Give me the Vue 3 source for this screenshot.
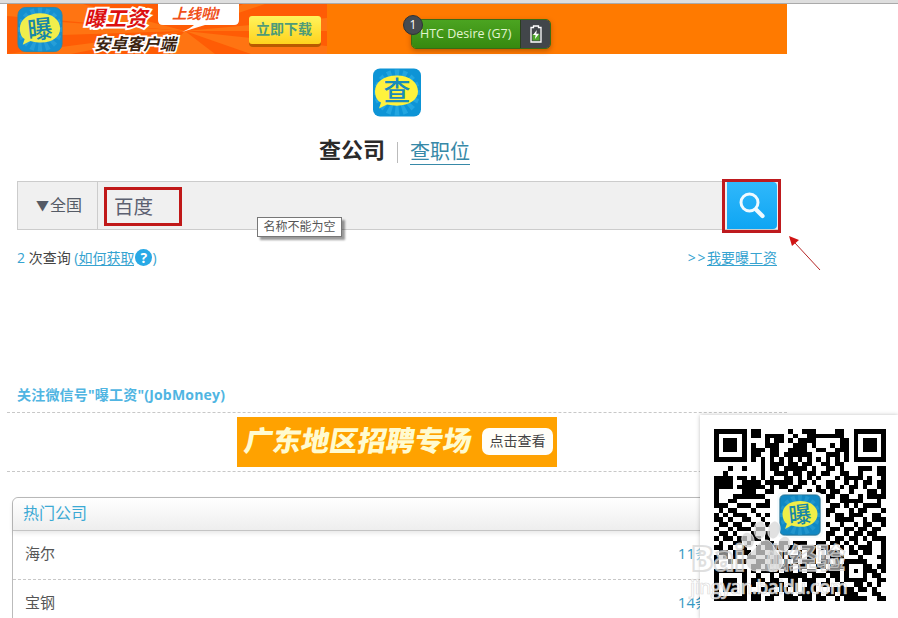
<template>
    <div class="page">
        <div class="browser-edge"></div>

        <div class="wrap">
            <!-- App download banner -->
            <div class="top-banner">
                <svg class="promo" width="320" height="50" viewBox="0 0 320 50">
                    <defs>
                        <linearGradient id="promoBtn" x1="0" y1="0" x2="0" y2="1">
                            <stop offset="0" stop-color="#fff45c" />
                            <stop offset="1" stop-color="#ffd21e" />
                        </linearGradient>
                    </defs>
                    <rect width="320" height="50" fill="#ff5c05" />
                    <g fill="#ff7412">
                        <path d="M178 27L76 0H0v12z" />
                        <path d="M178 27L54 18v13z" />
                        <path d="M178 27L0 50h64z" />
                        <path d="M178 27L156 50h52z" />
                        <path d="M178 27L236 0h22z" />
                        <path d="M178 27L320 14v13z" />
                        <path d="M178 27L320 42v8h-76z" />
                    </g>
                    <path d="M151 -3H232V16Q232 21 227 21H198Q188 24 175 28Q184 24 187 21H156Q151 21 151 16Z" fill="#fff" />
                    <g class="promo-text">
                        <text x="77" y="22" class="promo-name">曝工资</text>
                        <text x="87" y="46" class="promo-sub" textLength="82">安卓客户端</text>
                        <text x="165" y="15" class="promo-online">上线啦!</text>
                    </g>
                    <rect x="242" y="14" width="72" height="29" rx="4" fill="#b85a00" />
                    <rect x="242" y="12" width="72" height="28" rx="3" fill="url(#promoBtn)" />
                    <text x="249" y="30" class="promo-btn">立即下载</text>
                    <svg x="10" y="2" width="46" height="47" viewBox="0 0 48 48">
                        <rect x="1" y="1" width="46" height="46" rx="8" fill="#1490d0" stroke="#2f86a8" />
                        <path v-for="a in rays" :key="a" d="M24 24L21.5 1h5z" fill="#36abe0" opacity=".5" :transform="`rotate(${a} 24 24)`" />
                        <path d="M24 7C11 7 3 14 3 23c0 6 2 9 5 11l-2 6 8-4c18 5 31-2 31-13C45 14 37 7 24 7z" fill="#f0ee4c" />
                        <text x="24" y="33" class="logo-bao" transform="rotate(-6 24 24)">曝</text>
                    </svg>
                </svg>
                <div class="device">
                    <span class="device-count">1</span>
                    <span class="device-name">HTC Desire (G7)</span>
                    <span class="device-battery">
                        <svg width="12" height="18" viewBox="0 0 12 18">
                            <path d="M1 2.5h2.5v-1.5h5v1.5H11V17H1z" fill="none" stroke="#fff" stroke-width="1.3" />
                            <rect x="2.5" y="9" width="7" height="6.5" fill="#4fa82c" />
                            <path d="M6.8 5L3 10h2.6L5 14l4-5.2H6.3z" fill="#fff" />
                        </svg>
                    </span>
                </div>
            </div>

            <div class="logo">
                <svg width="48" height="49" viewBox="0 0 48 48">
                    <rect width="48" height="48" rx="7" fill="#0d94d6" />
                    <path v-for="a in rays" :key="a" d="M24 24L21.5 1h5z" fill="#31b2e8" opacity=".6" :transform="`rotate(${a} 24 24)`" />
                    <path d="M24 7C10 7 2 14 2 23c0 5 2 9 6 11l-2 6 8-4c18 4 31-3 31-13C45 14 37 7 24 7z" fill="#fff23c" />
                    <text x="24" y="32.5" class="logo-cha">查</text>
                </svg>
            </div>

            <div class="tabs">
                <span class="tab-on">查公司</span>
                <span class="tab-sep"></span>
                <a class="tab-link">查职位</a>
            </div>

            <div class="search">
                <div class="region"><span class="caret">▼</span>全国</div>
                <div class="field">
                    <div class="keyword">百度</div>
                    <div class="tip">名称不能为空</div>
                </div>
                <div class="search-btn">
                    <svg width="50" height="47" viewBox="0 0 50 47">
                        <circle cx="22.5" cy="20.5" r="8.5" fill="none" stroke="#effaff" stroke-width="3" />
                        <path d="M29 27.5l6.5 6.5" stroke="#effaff" stroke-width="4.2" stroke-linecap="round" />
                    </svg>
                    <span class="mark"></span>
                    <svg class="arrow" width="34" height="36" viewBox="0 0 34 36">
                        <path d="M7 7L32 34" stroke="#b52626" stroke-width="1" />
                        <path d="M1 0L11 4L4 10z" fill="#d01414" />
                    </svg>
                </div>
            </div>

            <div class="info">
                <div><i>2</i> 次查询 <span class="blue">(<a>如何获取</a><b class="help">?</b>)</span></div>
                <div class="blue"><span class="more">&gt;&gt;</span><a>我要曝工资</a></div>
            </div>

            <div class="wechat">关注微信号"曝工资"(JobMoney)</div>

            <div class="ad-row">
                <div class="ad">
                    <svg class="ad-title" width="245" height="50" viewBox="0 0 245 50">
                        <text x="7" y="34" textLength="227" lengthAdjust="spacingAndGlyphs" transform="skewX(-10) translate(5 0)">广东地区招聘专场</text>
                    </svg>
                    <span class="ad-btn">点击查看</span>
                </div>
            </div>

            <div class="hot">
                <div class="hot-head">热门公司</div>
                <div v-for="item in companies" :key="item.name" class="hot-item">
                    <span>{{ item.name }}</span>
                    <span class="hot-count">{{ item.count }}条</span>
                </div>
            </div>
        </div>

        <!-- Floating QR code -->
        <div class="qr">
            <svg width="198" height="204" viewBox="0 0 198 204">
                <g transform="translate(14 14) scale(4.65)">
                    <path :d="qrPath" fill="#000" shape-rendering="crispEdges" />
                </g>
                <rect x="77" y="77" width="46" height="46" rx="6" fill="#f4fbfd" />
                <svg x="79" y="79" width="42" height="42" viewBox="0 0 48 48">
                    <rect x="1" y="1" width="46" height="46" rx="5" fill="#1088c4" stroke="#27708f" />
                    <path v-for="a in rays" :key="a" d="M24 24L21.5 1h5z" fill="#2fa3d6" opacity=".5" :transform="`rotate(${a} 24 24)`" />
                    <path d="M24 8C11 8 4 15 4 23c0 5 2 9 5 11l-2 6 7-4c18 5 30-3 30-13C44 15 37 8 24 8z" fill="#f0ee48" />
                    <text x="24" y="33" class="logo-bao" transform="rotate(-6 24 24)">曝</text>
                </svg>
            </svg>
        </div>

        <svg class="watermark" width="170" height="90" viewBox="0 0 170 90">
            <g class="wm-big">
                <text x="4" y="50" textLength="54" lengthAdjust="spacingAndGlyphs">Bai</text>
                <text x="80" y="50" textLength="22" lengthAdjust="spacingAndGlyphs">du</text>
                <text x="102" y="48" class="wm-cn" textLength="56">经验</text>
            </g>
            <g class="wm-paw">
                <ellipse cx="61" cy="19" rx="6" ry="8" transform="rotate(-20 61 19)" />
                <ellipse cx="73" cy="9" rx="6" ry="9" />
                <ellipse cx="87" cy="9" rx="6" ry="9" transform="rotate(12 87 9)" />
                <ellipse cx="97" cy="23" rx="6" ry="8" transform="rotate(20 97 23)" />
                <path d="M79 19c-7 0-9 8-16 13-7 6-4 18 6 18 6 0 8-1 13 0 12 3 18-9 10-17-6-6-7-14-13-14z" />
            </g>
            <text x="3" y="73" class="wm-url" textLength="158">jingyan.baidu.com</text>
        </svg>
    </div>
</template>

<script setup>
import { computed } from "vue";

const companies = [
    { name: "海尔", count: 11 },
    { name: "宝钢", count: 14 },
];

// Angles of the light rays behind the logo bubble
const rays = Array.from({ length: 16 }, (_, i) => i * 22.5);

const qrRows = [
    "1111111011000000100111000011001111111",
    "1000001011011110010011111111001000001",
    "1011101000010110101111000001101011101",
    "1011101010011100011101000101101011101",
    "1011101011101100111100110011101011101",
    "1000001011001101111110001110101000001",
    "1111111010101010101010101010101111111",
    "0000000000101110110110011011000000000",
    "0001001000101101111101001101000111011",
    "0010000000100111011011011001100100011",
    "1111011010101001101010100010111101001",
    "1111001111011111101101001100101011011",
    "1111011111101011011000101101011010011",
    "1000001110011000110010110110010001101",
    "1000111111100000000000001101100101111",
    "1001100000010000000000001001111100010",
    "1110011101110000000000000110101011110",
    "0101100010000000000000001100010110001",
    "1010111001010000000000001011011100110",
    "1101001100100000000000000011110010111",
    "0110110010010000000000001001001011001",
    "1001011101100000000000000110110110110",
    "0110100010010000000000001100101101100",
    "1011011011010000000000001011011010111",
    "0100110100111011011100110110101001001",
    "1101001001011110110111011001010111001",
    "0110111101101011001011001110011011001",
    "1010100110010110111011010111000100011",
    "1001011001101101010111011010111110001",
    "0000000011010011101100110111100011011",
    "1111111010111101101011001110101011101",
    "1000001001001011111101110110100010110",
    "1011101011101100110111001010111110011",
    "1011101010011110110011011001001101010",
    "1011101000111011010111000111110110100",
    "1000001011001101101110101101111000110",
    "1111111011011001110110110010111110011",
];

const qrPath = computed(() =>
    qrRows
        .map((row, y) => [...row].map((cell, x) => (cell === "1" ? `M${x} ${y}h1v1h-1z` : "")).join(""))
        .join("")
);
</script>

<style>
body {
    margin: 0;
    background: #fff;
    overflow: hidden;
}
</style>

<style scoped>
.page {
    position: relative;
    width: 898px;
    height: 618px;
    overflow: hidden;
    background: #fff;
    font-family: "Open Sans", "Noto Sans CJK SC", sans-serif;
    color: #444;
}

.browser-edge {
    height: 4px;
    box-sizing: border-box;
    background: #dedede;
    border-bottom: 1px solid #aaa;
}

.wrap {
    width: 780px;
    margin-left: 7px;
}

.top-banner {
    display: flex;
    height: 50px;
    background: #ff7a00;
}

.promo-name {
    font-size: 21px;
    font-weight: 700;
    font-style: italic;
    fill: #dc1010;
    stroke: #fff;
    stroke-width: 4px;
    paint-order: stroke;
}

.promo-sub {
    font-size: 16.5px;
    font-weight: 700;
    font-style: italic;
    fill: #3c2410;
    stroke: #fff;
    stroke-width: 3.5px;
    paint-order: stroke;
}

.promo-online {
    font-size: 14.5px;
    font-weight: 700;
    font-style: italic;
    fill: #f0501a;
}

.promo-btn {
    font-size: 14px;
    font-weight: 700;
    fill: #4e9b78;
}

.logo-bao {
    font-size: 26px;
    font-weight: 500;
    fill: #1787a8;
    text-anchor: middle;
}

.logo-cha {
    font-size: 27px;
    font-weight: 500;
    fill: #1a8cba;
    text-anchor: middle;
}

.device {
    position: relative;
    display: flex;
    box-sizing: border-box;
    width: 140px;
    height: 30px;
    margin: 15px 0 0 84px;
    border: 1px solid #3c6b14;
    border-radius: 5px;
    box-shadow: 0 2px 5px rgba(120, 50, 0, .45);
}

.device-name {
    width: 108px;
    box-sizing: border-box;
    padding-left: 8px;
    line-height: 28px;
    font-size: 12.5px;
    white-space: nowrap;
    color: #e2f5d0;
    background: linear-gradient(#4ba421, #37890f);
    border-radius: 4px 0 0 4px;
}

.device-battery {
    display: flex;
    flex: 1;
    align-items: center;
    justify-content: center;
    background: #42464a;
    border-left: 1px solid #29401c;
    border-radius: 0 4px 4px 0;
}

.device-count {
    position: absolute;
    left: -9px;
    top: -5px;
    width: 18px;
    height: 18px;
    border: 1px solid #2f3235;
    border-radius: 50%;
    background: #464b50;
    color: #fff;
    font-size: 12px;
    line-height: 18px;
    text-align: center;
}

.logo {
    height: 49px;
    padding-top: 14px;
}

.logo svg {
    display: block;
    margin: 0 auto;
}

.tabs {
    display: flex;
    align-items: center;
    height: 30px;
    margin-top: 19px;
    padding-left: 312px;
}

.tab-on {
    font-size: 22px;
    line-height: 26px;
    padding-bottom: 4px;
    font-weight: 700;
    color: #2b2b2b;
}

.tab-sep {
    width: 1px;
    height: 21px;
    margin: 2px 12px 0;
    background: #bbb;
}

.tab-link {
    height: 27px;
    line-height: 29px;
    font-size: 20px;
    color: #3789a8;
    border-bottom: 1px solid #3789a8;
}

.search {
    display: flex;
    box-sizing: border-box;
    width: 761px;
    height: 49px;
    margin: 15px 9px 0 10px;
    border: 1px solid #ccc;
    border-right: 0;
    background: #f0f0f0;
}

.region {
    display: flex;
    width: 80px;
    box-sizing: border-box;
    padding-left: 18px;
    border-right: 1px solid #ccc;
    font-size: 16px;
    line-height: 47px;
    color: #555b66;
    white-space: nowrap;
}

.caret {
    width: 14px;
    font-size: 13px;
    line-height: 46px;
}

.field {
    position: relative;
    flex: 1;
}

.keyword {
    box-sizing: border-box;
    width: 78px;
    height: 39px;
    margin: 5px 0 0 6px;
    padding-left: 7px;
    border: 3px solid #c01818;
    font-size: 19.5px;
    line-height: 34px;
    color: #5c6070;
}

.tip {
    position: absolute;
    left: 159px;
    top: 35px;
    z-index: 2;
    box-sizing: border-box;
    width: 85px;
    height: 20px;
    border: 1px solid #777;
    background: #fff;
    box-shadow: 3px 3px 2px rgba(0, 0, 0, .4);
    color: #555;
    font-size: 12px;
    line-height: 18px;
    text-align: center;
}

.search-btn {
    position: relative;
    width: 50px;
    height: 47px;
    margin-right: 1px;
    border-radius: 0 4px 4px 0;
    background: linear-gradient(#30b8fb, #0ea5f3);
}

.mark {
    position: absolute;
    left: -5px;
    top: -3px;
    width: 53px;
    height: 48px;
    border: 3px solid #be1a1e;
}

.arrow {
    position: absolute;
    left: 61px;
    top: 54px;
}

.info {
    display: flex;
    justify-content: space-between;
    margin: 17px 10px 0;
    height: 22px;
    line-height: 22px;
    font-size: 14px;
}

.info i {
    font-style: normal;
    color: #36a3d0;
}

.blue {
    color: #36a3d0;
}

.info a {
    display: inline-block;
    height: 18px;
    line-height: 22px;
    vertical-align: top;
    border-bottom: 1px solid #36a3d0;
}

.more {
    letter-spacing: 1.6px;
}

.help {
    display: inline-block;
    width: 17px;
    height: 17px;
    margin-left: 1px;
    border-radius: 50%;
    background: #28a9e6;
    color: #fff;
    font-size: 14px;
    line-height: 17px;
    text-align: center;
}

.wechat {
    height: 27px;
    margin-top: 116px;
    padding-left: 10px;
    font-size: 14px;
    font-weight: 700;
    line-height: 20px;
    letter-spacing: .2px;
    color: #50b5e2;
}

.ad-row {
    box-sizing: border-box;
    height: 60px;
    padding-top: 4px;
    border-top: 1px dashed #c8c8c8;
    border-bottom: 1px dashed #c8c8c8;
}

.ad {
    display: flex;
    align-items: center;
    width: 320px;
    height: 50px;
    margin: 0 auto;
    background: #ffa200;
}

.ad-title text {
    font-size: 28px;
    font-weight: 900;
    fill: #fffbd0;
}

.ad-btn {
    width: 71px;
    height: 27px;
    margin-bottom: 1px;
    border-radius: 7px;
    background: #fffef8;
    color: #444;
    font-size: 14px;
    line-height: 26px;
    text-align: center;
}

.hot {
    width: 770px;
    margin: 25px 0 0 5px;
    box-sizing: border-box;
    border: 1px solid #bbb;
    border-radius: 6px 6px 0 0;
}

.hot-head {
    height: 32px;
    padding-left: 10px;
    border-bottom: 1px solid #c4c4c4;
    border-radius: 6px 6px 0 0;
    background: linear-gradient(#fff, #eee);
    box-shadow: 0 2px 5px rgba(0, 0, 0, .1);
    color: #3ba9d4;
    font-size: 16px;
    line-height: 30px;
}

.hot-item {
    display: flex;
    justify-content: space-between;
    height: 48px;
    padding: 0 71px 0 12px;
    border-bottom: 1px dashed #c8c8c8;
    font-size: 15px;
    line-height: 44px;
    color: #555;
}

.hot-count {
    color: #3399c4;
}

.qr {
    position: absolute;
    left: 700px;
    top: 415px;
    width: 198px;
    height: 204px;
    background: #fff;
    box-shadow: 0 0 4px rgba(0, 0, 0, .25);
}

.watermark {
    position: absolute;
    left: 687px;
    top: 521px;
}

.wm-big text {
    font-size: 35px;
    font-weight: 800;
    fill: rgba(255, 255, 255, .5);
    stroke: rgba(215, 215, 215, .8);
    stroke-width: 2.2px;
}

.wm-big .wm-cn {
    font-size: 28px;
    stroke-width: 1.4px;
}

.wm-paw {
    fill: rgba(215, 215, 215, .75);
    stroke: rgba(255, 255, 255, .7);
    stroke-width: 1;
}

.wm-url {
    font-size: 19px;
    font-weight: 600;
    fill: rgba(255, 255, 255, .8);
    stroke: rgba(205, 205, 205, .75);
    stroke-width: .7px;
}
</style>
